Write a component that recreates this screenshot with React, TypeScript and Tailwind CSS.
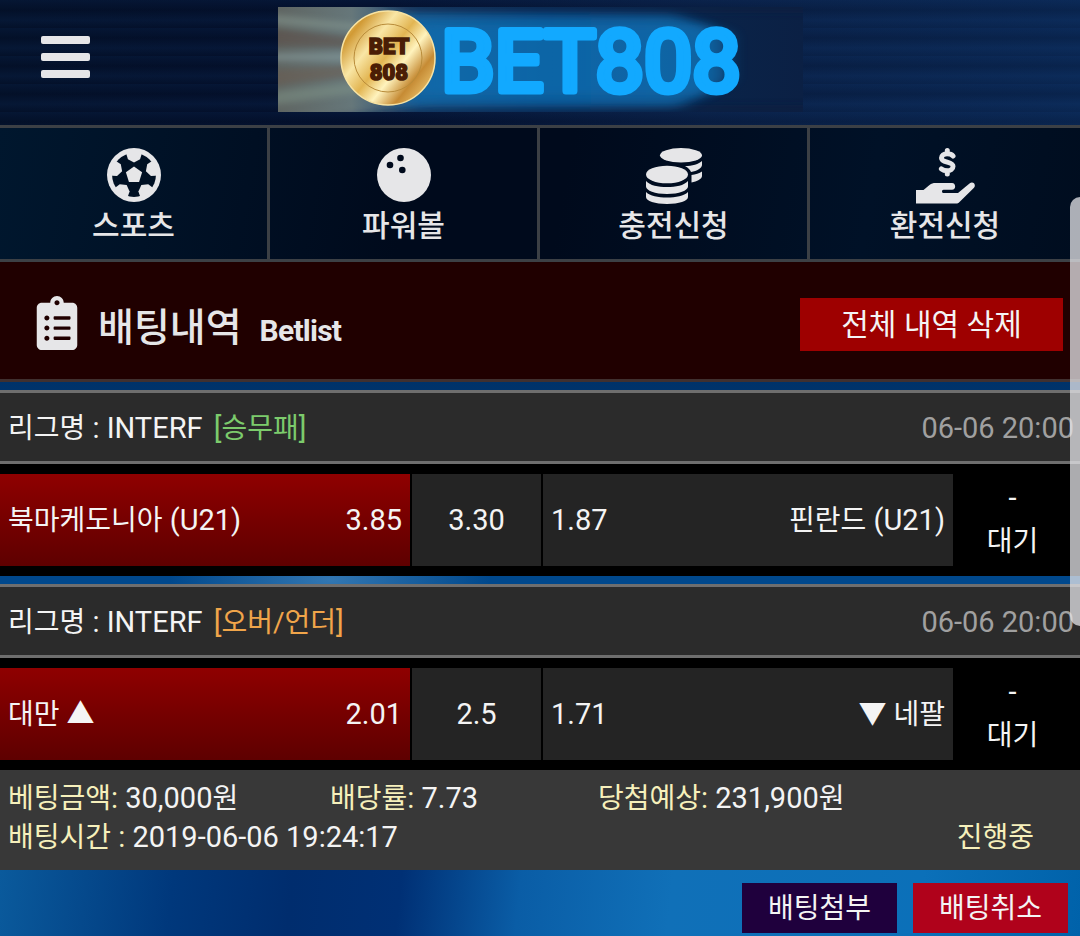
import React from 'react';
import { FaClipboardList } from 'react-icons/fa';

interface Match {
  id: number;
  league: string;
  type: string;
  typeClass: string;
  date: string;
  home: React.ReactNode;
  homeOdds: string;
  drawOdds: string;
  awayOdds: string;
  away: React.ReactNode;
  status: string;
}

// Hangul sits a little smaller than the latin text next to it
const Ko: React.FC<{ children: React.ReactNode }> = ({ children }) => (
  <span className="text-[28px]">{children}</span>
);

const SoccerIcon: React.FC = () => (
  <svg viewBox="-80 -80 160 160" className="h-[54px] w-[54px]" aria-hidden="true">
    <circle r="80" fill="#e6e6e8" />
    <circle r="65" fill="#001023" />
    <g fill="#e6e6e8">
      <polygon points="0,-25 24,-8 15,21 -15,21 -24,-8" />
      {[0, 72, 144, 216, 288].map((angle) => (
        <polygon key={angle} points="-22,-70 -22,-60 -18,-47 0,-37 18,-47 22,-60 22,-70" transform={`rotate(${angle})`} />
      ))}
    </g>
  </svg>
);

const BallIcon: React.FC = () => (
  <svg viewBox="0 0 54 54" className="h-[54px] w-[54px]" aria-hidden="true">
    <circle cx="27" cy="27" r="27" fill="#e6e6e8" />
    <g fill="#000a1c">
      <circle cx="23.5" cy="10" r="3.3" />
      <circle cx="13" cy="17" r="3.3" />
      <circle cx="25.3" cy="22" r="3.3" />
    </g>
  </svg>
);

const CoinsIcon: React.FC = () => (
  <svg viewBox="0 0 56 56" className="h-[56px] w-[56px]" fill="#e6e6e8" aria-hidden="true">
    <ellipse cx="35" cy="7.3" rx="21" ry="7.3" />
    <path d="M56 13v4c0 3-5 6-11 7-1-2.500-3-4.500-6-6 7 0 14-2 17-5z" />
    <path d="M56 23.500v4.500c0 3-5 5.500-10.500 6.500v-7.500c4-.6 8-1.800 10.500-3.500z" />
    <ellipse cx="21" cy="26.500" rx="21" ry="8.800" />
    <path d="M0 33c4 4.500 12 6 21 6s17-1.500 21-6v5.500c0 4-9 7.500-21 7.500S0 42.500 0 38.500z" />
    <path d="M0 44c4 4 12 5.500 21 5.500s17-1.500 21-5.500v5c0 4-9 7-21 7S0 53 0 49z" />
  </svg>
);

const HandIcon: React.FC = () => (
  <svg viewBox="0 0 59 56" className="h-[56px] w-[59px]" fill="none" aria-hidden="true">
    <path
      d="M37 8C35.500 6 33 5.800 31 5.800c-3.300 0-5.500 1.700-5.500 4.200 0 5.300 11.500 3 11.500 8.300 0 2.700-2.700 4.500-5.500 4.500-2.300 0-4.500-.5-6.200-2M31.300 2.500v3M31.300 23v3"
      stroke="#e6e6e8"
      strokeWidth="5"
      strokeLinecap="round"
    />
    <path
      d="M0 42h7.500l6-5c2-1.600 3.500-2 6-2H36c4.200 0 4.200 6.800 0 6.800h-8.500c-2 0-2 3.200 0 3.200H42L53.500 35.500c3.400-2.500 7 .8 4.500 4.300L43.500 54c-1 1.200-2 1.500-3.500 1.500H0z"
      fill="#e6e6e8"
    />
  </svg>
);

const Logo: React.FC = () => (
  <svg viewBox="0 0 525 105" className="h-[105px] w-[525px]" role="img" aria-label="BET808">
    <defs>
      <linearGradient id="strip" x1="0" x2="1">
        <stop offset="0" stopColor="#5f6562" />
        <stop offset=".14" stopColor="#66777a" />
        <stop offset=".27" stopColor="#1c4a78" />
        <stop offset=".5" stopColor="#0b3466" />
        <stop offset=".85" stopColor="#0a2348" />
        <stop offset="1" stopColor="#0b2044" />
      </linearGradient>
      <linearGradient id="gold" x1="0" y1=".1" x2="1" y2=".9">
        <stop offset="0" stopColor="#f3cf72" />
        <stop offset=".14" stopColor="#d19a35" />
        <stop offset=".32" stopColor="#f9e6a5" />
        <stop offset=".48" stopColor="#e2b552" />
        <stop offset=".62" stopColor="#fff3bd" />
        <stop offset=".78" stopColor="#c68b34" />
        <stop offset="1" stopColor="#f6d580" />
      </linearGradient>
      <linearGradient id="trailFill" x1="0" x2="1">
        <stop offset="0" stopColor="#0e72b8" />
        <stop offset="1" stopColor="#1488d4" />
      </linearGradient>
      <filter id="trail" x="-20%" y="-20%" width="140%" height="140%">
        <feGaussianBlur stdDeviation="9 4" />
      </filter>
      <filter id="streak" x="-20%" y="-60%" width="140%" height="220%">
        <feGaussianBlur stdDeviation="8 3" />
      </filter>
      <clipPath id="frame">
        <rect width="525" height="105" />
      </clipPath>
    </defs>
    <g clipPath="url(#frame)">
      <rect width="525" height="105" fill="url(#strip)" />
      <g filter="url(#streak)" opacity=".5">
        <path d="M-20 20L110 34v8L-20 38z" fill="#5b4a42" />
        <path d="M-20 46H110v8H-20z" fill="#8fa6a8" />
        <path d="M-20 64L110 56v10L-20 80z" fill="#6c5a4e" />
        <path d="M-20 86L110 72v10L-20 100z" fill="#809589" />
        <path d="M-20 6L110 20v6L-20 16z" fill="#8a9d94" />
        <path d="M90 -6H540V6H130z" fill="#071a3c" />
        <path d="M40 112H540V98H150z" fill="#071a3c" />
      </g>
      <path d="M120 8H395L450 26V74L400 100H120z" fill="url(#trailFill)" opacity=".55" filter="url(#trail)" />
      <path d="M140 18H430V88H140z" fill="#1074bb" opacity=".4" filter="url(#trail)" />
      <circle cx="110" cy="51" r="47" fill="url(#gold)" stroke="#f8e3a2" strokeWidth="1.500" />
      <circle cx="110" cy="51" r="34" fill="none" stroke="#b98c3a" strokeWidth="1" />
      <g fill="#4a1d05" stroke="#4a1d05" strokeWidth="1.500" textAnchor="middle" className="font-['Roboto',sans-serif] text-[22px] font-black">
        <text x="111" y="47">BET</text>
        <text x="111" y="73">808</text>
      </g>
      <text
        x="163"
        y="84"
        fill="#12a9ff"
        stroke="#12a9ff"
        strokeWidth="7"
        strokeLinejoin="round"
        className="font-['Roboto',sans-serif] text-[86px] font-normal"
      >
        BET808
      </text>
    </g>
  </svg>
);

const menuItems = [
  { label: '스포츠', icon: <SoccerIcon /> },
  { label: '파워볼', icon: <BallIcon /> },
  { label: '충전신청', icon: <CoinsIcon /> },
  { label: '환전신청', icon: <HandIcon /> },
];

const matches: Match[] = [
  {
    id: 1,
    league: 'INTERF',
    type: '승무패',
    typeClass: 'text-[#7ccb6c]',
    date: '06-06 20:00',
    home: <><Ko>북마케도니아</Ko> (U21)</>,
    homeOdds: '3.85',
    drawOdds: '3.30',
    awayOdds: '1.87',
    away: <><Ko>핀란드</Ko> (U21)</>,
    status: '대기',
  },
  {
    id: 2,
    league: 'INTERF',
    type: '오버/언더',
    typeClass: 'text-[#f0a54a]',
    date: '06-06 20:00',
    home: <Ko>대만 ▲</Ko>,
    homeOdds: '2.01',
    drawOdds: '2.5',
    awayOdds: '1.71',
    away: <Ko>▼ 네팔</Ko>,
    status: '대기',
  },
];

const MatchBlock: React.FC<{ match: Match }> = ({ match }) => (
  <li>
    <div className="flex h-[74px] items-center justify-between border-y-[3px] border-[#6e6e6e] bg-[#2b2b2b] pt-0.5 pr-1.5 pl-2">
      <div className="whitespace-nowrap">
        <Ko>리그명</Ko> : {match.league} <span className={`ml-1 ${match.typeClass}`}>[<Ko>{match.type}</Ko>]</span>
      </div>
      <time className="whitespace-nowrap text-[#a0a0a0]">{match.date}</time>
    </div>
    <div className="grid h-[112px] grid-cols-[410fr_129fr_410fr_119fr] gap-x-0.5 bg-black py-2.5 pr-1.5">
      <div className="flex items-center justify-between bg-linear-to-b from-[#8f0000] to-[#5e0000] px-2">
        <span>{match.home}</span>
        <span>{match.homeOdds}</span>
      </div>
      <div className="flex items-center justify-center bg-[#242424]">{match.drawOdds}</div>
      <div className="flex items-center justify-between bg-[#242424] px-2">
        <span>{match.awayOdds}</span>
        <span>{match.away}</span>
      </div>
      <div className="flex flex-col items-center justify-center pr-1 leading-[44px]">
        <span>-</span>
        <Ko>{match.status}</Ko>
      </div>
    </div>
  </li>
);

const App: React.FC = () => {
  return (
    <div className="relative flex min-h-screen flex-col overflow-hidden bg-[#002d6e] font-['Roboto','Noto_Sans_CJK_KR',sans-serif] text-[29px] leading-[39px] text-[#f4f4f4]">
      <header className="grid h-[125px] grid-cols-[1fr_auto_1fr] items-start bg-[repeating-linear-gradient(180deg,#0c2a5830_0px,#00081c30_10px,#0f306030_20px,#00081c20_28px),linear-gradient(90deg,#04122b,#04112f_35%,#0a2148_65%,#0b2a58)]">
        <button type="button" aria-label="메뉴" className="mt-9 ml-[41px] flex w-[49px] flex-col gap-[9px]">
          <span className="h-2 rounded-xs bg-[#e6e6e8]" />
          <span className="h-2 rounded-xs bg-[#e6e6e8]" />
          <span className="h-2 rounded-xs bg-[#e6e6e8]" />
        </button>
        <a href="#" className="mt-[7px] block">
          <Logo />
        </a>
      </header>

      <nav className="grid h-[137px] grid-cols-4 divide-x-[3px] divide-[#3c4045] border-y-[3px] border-[#3c4045] bg-[linear-gradient(100deg,#00172e,#000a1c_38%,#000a1c_52%,#001127_80%,#000d1f)]">
        {menuItems.map((item) => (
          <a key={item.label} href="#" className="flex flex-col items-center pt-5 text-[30px] font-medium text-[#e6e6e8]">
            <span className="flex h-[58px] items-start">{item.icon}</span>
            {item.label}
          </a>
        ))}
      </nav>

      <section className="flex h-[120px] items-center justify-between border-b-[3px] border-[#40302f] bg-[#200000] pt-2 pr-[17px] pl-[30px]">
        <h1 className="flex items-center text-[#e6e6e8]">
          <FaClipboardList className="mb-1 h-[54px] w-[54px]" />
          <span className="mt-2 ml-3.5 text-[39px] font-medium">배팅내역</span>
          <span className="mt-3 ml-[18px] text-[30px] font-bold tracking-tight">Betlist</span>
        </h1>
        <button type="button" className="h-[53px] w-[263px] bg-[#9e0000] text-[30px]">
          전체 내역 삭제
        </button>
      </section>

      <div className="bg-[radial-gradient(ellipse_160px_60px_at_330px_198px,#3277b2,transparent),linear-gradient(180deg,#003269,#00488c_50%)] pt-2">
        <ul className="flex flex-col gap-2">
          {matches.map((match) => (
            <MatchBlock key={match.id} match={match} />
          ))}
        </ul>
      </div>

      <section className="h-[100px] bg-[#383838] pt-[9px] pr-[46px] pl-2">
        <div className="grid grid-cols-[322fr_268fr_436fr]">
          <div><span className="text-[#f6f0bb]"><Ko>베팅금액</Ko>:</span> 30,000<Ko>원</Ko></div>
          <div><span className="text-[#f6f0bb]"><Ko>배당률</Ko>:</span> 7.73</div>
          <div><span className="text-[#f6f0bb]"><Ko>당첨예상</Ko>:</span> 231,900<Ko>원</Ko></div>
        </div>
        <div className="flex justify-between">
          <div><span className="text-[#f6f0bb]"><Ko>배팅시간</Ko> :</span> 2019-06-06 19:24:17</div>
          <span className="text-[#f6f0bb]"><Ko>진행중</Ko></span>
        </div>
      </section>

      <div className="flex grow items-start justify-end gap-4 bg-[linear-gradient(96deg,#0a5a9c_0%,#00387c_16%,#002d6e_27%,#003075_37%,#0a5da6_48%,#1070b8_62%,#0b70b9_85%,#0062aa_100%)] pt-[13px] pr-3">
        <button type="button" className="h-[50px] w-[155px] bg-[#1f003d] text-[28px]">배팅첨부</button>
        <button type="button" className="h-[50px] w-[155px] bg-[#b0021b] text-[28px]">배팅취소</button>
      </div>

      {/* scroll thumb floating above the page */}
      <div className="pointer-events-none absolute top-[197px] right-0 h-[429px] w-2.5 rounded-l-[10px] bg-[#e6e6ea]/75" />
    </div>
  );
};

export default App;
